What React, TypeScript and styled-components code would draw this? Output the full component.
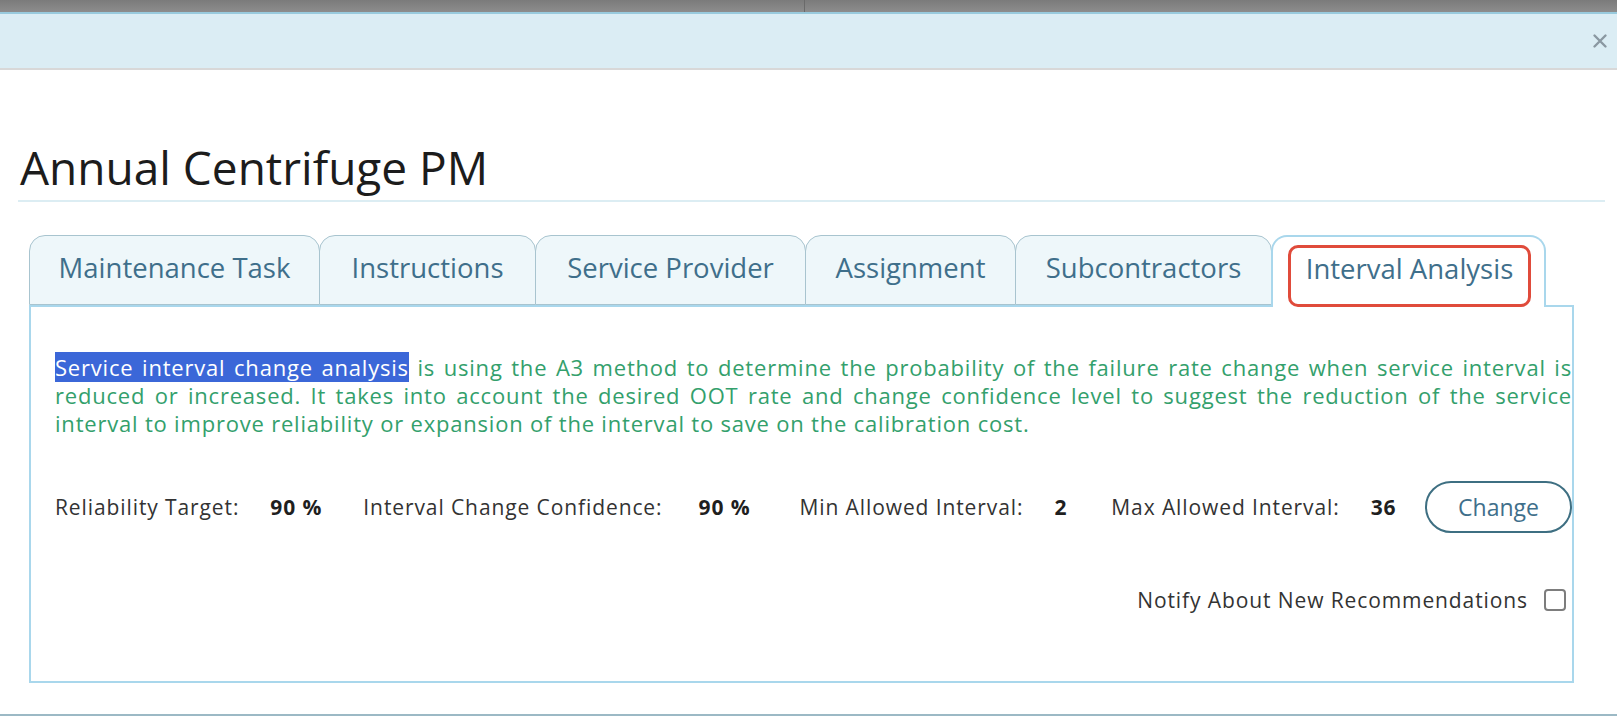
import React from "react";
import styled, { createGlobalStyle } from "styled-components";

const GlobalStyle = createGlobalStyle`
  html, body {
    margin: 0;
    padding: 0;
    background: #fff;
    font-family: "Open Sans", "Noto Sans", sans-serif;
  }
`;

const tabs = [
  { label: "Maintenance Task", width: 291 },
  { label: "Instructions", width: 217 },
  { label: "Service Provider", width: 271 },
  { label: "Assignment", width: 211 },
  { label: "Subcontractors", width: 257 },
  { label: "Interval Analysis", width: 275, active: true },
];

// spacing is the distance between the label and its value, and after the value
const stats = [
  { label: "Reliability Target:", value: "90 %", inner: 31, after: 41 },
  { label: "Interval Change Confidence:", value: "90 %", inner: 36, after: 49 },
  { label: "Min Allowed Interval:", value: "2", inner: 31, after: 44 },
  { label: "Max Allowed Interval:", value: "36", inner: 31, after: 0 },
];

function CloseIcon() {
  return (
    <svg width="16" height="16" viewBox="0 0 16 16">
      <path d="M2.5 2.5 L13.5 13.5 M13.5 2.5 L2.5 13.5" stroke="#8a98a1" strokeWidth="2.4" strokeLinecap="round" />
    </svg>
  );
}

function App() {
  return (
    <>
      <GlobalStyle />
      <StyledBackdrop>
        <StyledBackdropPane />
        <StyledBackdropPane $last />
      </StyledBackdrop>
      <StyledModal>
        <StyledHeader>
          <StyledClose aria-label="Close">
            <CloseIcon />
          </StyledClose>
        </StyledHeader>
        <StyledBody>
          <StyledTitle>Annual Centrifuge PM</StyledTitle>
          <StyledTabs>
            <StyledTabList>
              {tabs.map((t) => (
                <StyledTab key={t.label} $active={!!t.active} $width={t.width}>
                  {t.active ? <StyledFocus>{t.label}</StyledFocus> : t.label}
                </StyledTab>
              ))}
            </StyledTabList>
            <StyledPanel>
              <StyledText>
                <StyledSelected>Service interval change analysis</StyledSelected> is using the A3
                method to determine the probability of the failure rate change when service
                interval is reduced or increased. It takes into account the desired OOT rate and
                change confidence level to suggest the reduction of the service interval to
                improve reliability or expansion of the interval to save on the calibration cost.
              </StyledText>
              <StyledStats>
                {stats.map((s) => (
                  <StyledStat key={s.label} $inner={s.inner} $after={s.after}>
                    <StyledStatLabel>{s.label}</StyledStatLabel>
                    <StyledStatValue>{s.value}</StyledStatValue>
                  </StyledStat>
                ))}
                <StyledChange>Change</StyledChange>
              </StyledStats>
              <StyledNotify>
                Notify About New Recommendations
                <StyledCheckbox type="checkbox" />
              </StyledNotify>
            </StyledPanel>
          </StyledTabs>
        </StyledBody>
      </StyledModal>
    </>
  );
}

export default App;

const StyledBackdrop = styled.div`
  display: flex;
  height: 12px;
  background: linear-gradient(#7b7b7b, #8d8d8d);
`;

const StyledBackdropPane = styled.div<{ $last?: boolean }>`
  width: ${(p) => (p.$last ? "auto" : "804px")};
  flex: ${(p) => (p.$last ? 1 : "none")};
  border-right: ${(p) => (p.$last ? "none" : "1px solid #6a6a6a")};
`;

const StyledModal = styled.div`
  display: flex;
  flex-direction: column;
  border-bottom: 3px solid #9cb9c5;
`;

const StyledHeader = styled.div`
  display: flex;
  align-items: center;
  justify-content: flex-end;
  height: 54px;
  padding-right: 6px;
  background: #dbedf4;
  border-top: 2px solid #98cadd;
  border-bottom: 2px solid #d8d8d8;
`;

const StyledClose = styled.button`
  display: flex;
  align-items: center;
  justify-content: center;
  width: 22px;
  height: 22px;
  padding: 0;
  border: none;
  background: transparent;
  cursor: pointer;
`;

const StyledBody = styled.div`
  display: flex;
  flex-direction: column;
  padding: 70px 12px 31px 18px;
`;

const StyledTitle = styled.h1`
  margin: 0;
  padding: 0 0 6px 2px;
  font-size: 46px;
  font-weight: 400;
  line-height: 54px;
  color: #1c1c1c;
  border-bottom: 2px solid #dcedf3;
`;

const StyledTabs = styled.div`
  display: flex;
  flex-direction: column;
  margin: 33px 31px 0 11px;
`;

const StyledTabList = styled.div`
  display: flex;
  align-items: flex-end;
`;

const StyledTab = styled.div<{ $active: boolean; $width: number }>`
  display: flex;
  align-items: center;
  justify-content: center;
  box-sizing: border-box;
  width: ${(p) => p.$width}px;
  height: ${(p) => (p.$active ? "72px" : "70px")};
  margin-bottom: ${(p) => (p.$active ? "-2px" : "0")};
  margin-left: -1px;
  padding: ${(p) => (p.$active ? "8px 13px 0 15px" : "0 0 6px")};
  font-size: 27.5px;
  color: #3f6f8b;
  background: ${(p) => (p.$active ? "#fff" : "#eef7fa")};
  border: ${(p) => (p.$active ? "2px solid #a9d7ec" : "1px solid #a8c4cf")};
  border-bottom: ${(p) => (p.$active ? "none" : "1px solid #a8c4cf")};
  border-radius: 16px 16px 0 0;
  position: relative;
  z-index: ${(p) => (p.$active ? 1 : 0)};

  &:first-child {
    margin-left: 0;
  }
`;

const StyledFocus = styled.span`
  display: flex;
  align-items: center;
  justify-content: center;
  box-sizing: border-box;
  width: 100%;
  height: 100%;
  padding-bottom: 16px;
  border: 3px solid #e04b3b;
  border-radius: 10px;
`;

const StyledPanel = styled.div`
  display: flex;
  flex-direction: column;
  box-sizing: border-box;
  height: 378px;
  padding: 46px 0 0 24px;
  border: 2px solid #a9d7ec;
`;

const StyledText = styled.p`
  margin: 0;
  font-size: 22px;
  letter-spacing: 0.8px;
  line-height: 28px;
  color: #33a06c;
  text-align: justify;
`;

const StyledSelected = styled.span`
  background: #3b67d8;
  color: #fff;
`;

const StyledStats = styled.div`
  display: flex;
  align-items: center;
  margin-top: 44px;
  font-size: 21px;
  letter-spacing: 0.9px;
  color: #333;
`;

const StyledStat = styled.div<{ $inner: number; $after: number }>`
  display: flex;
  align-items: center;
  gap: ${(p) => p.$inner}px;
  margin-right: ${(p) => p.$after}px;
`;

const StyledStatLabel = styled.span``;

const StyledStatValue = styled.span`
  font-weight: 700;
  color: #1f1f1f;
`;

const StyledChange = styled.button`
  margin-left: auto;
  height: 52px;
  padding: 0 31px;
  font-family: inherit;
  font-size: 23px;
  color: #3f6f8b;
  background: #fff;
  border: 2px solid #3e6f82;
  border-radius: 26px;
  cursor: pointer;
`;

const StyledNotify = styled.label`
  display: flex;
  align-items: center;
  justify-content: flex-end;
  gap: 16px;
  margin-top: 53px;
  margin-right: 6px;
  font-size: 21px;
  letter-spacing: 0.9px;
  color: #333;
`;

const StyledCheckbox = styled.input`
  appearance: none;
  width: 22px;
  height: 22px;
  margin: 0;
  border: 2px solid #7d7d7d;
  border-radius: 4px;
  background: #fff;
`;
